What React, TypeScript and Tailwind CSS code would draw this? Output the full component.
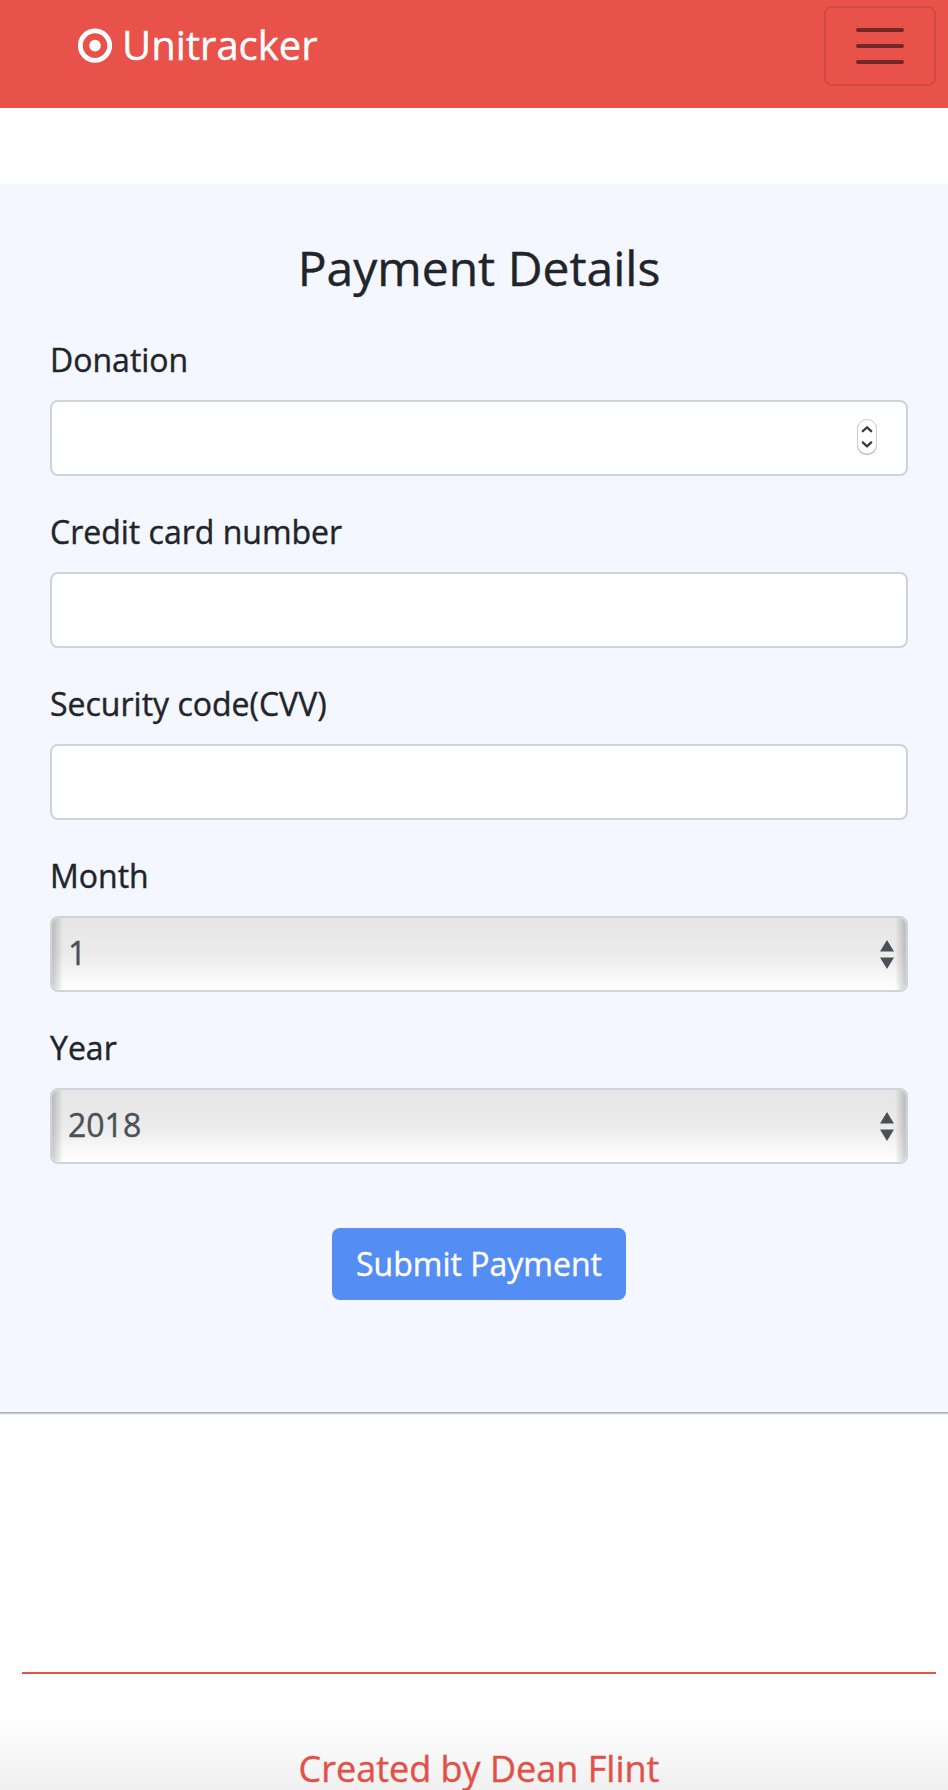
import type { ReactNode } from "react";

function Field({ label, id, children }: { label: string; id: string; children: ReactNode }) {
  return (
    <div className="mb-8 flex flex-col">
      <label htmlFor={id} className="mb-4 h-12 self-start whitespace-nowrap text-[32px] leading-[48px]">
        {label}
      </label>
      {children}
    </div>
  );
}

function TextBox({ id, children }: { id: string; children?: ReactNode }) {
  return (
    <div className="flex h-[76px] items-center rounded-lg border-2 border-[#ced4da] bg-white pr-7">
      <input id={id} type="text" className="h-full min-w-0 flex-1 bg-transparent px-4 text-[32px] text-[#495057] outline-none" />
      {children}
    </div>
  );
}

function Stepper() {
  return (
    <svg width="22" height="40" viewBox="0 0 22 40" fill="none" className="mb-0.5 shrink-0">
      <rect x="1.2" y="2.6" width="19.6" height="35.4" rx="9.6" fill="#aaa" />
      <rect x="1.5" y="2.5" width="19" height="34.5" rx="9.5" fill="#fff" stroke="#cfcfcf" />
      <path d="M6.8 14.2 11 10.3l4.2 3.9M6.8 25.4 11 29.3l4.2-3.9" stroke="#3c3c3c" strokeWidth="2.3" strokeLinecap="round" strokeLinejoin="round" />
    </svg>
  );
}

function SelectBox({ id, value }: { id: string; value: string }) {
  return (
    <button
      id={id}
      type="button"
      className="flex h-[76px] rounded-lg border-2 border-[#ced4da] bg-linear-to-b from-[#e6e6e6] via-[#ebebeb] via-50% to-white text-left text-[32px] leading-[46px] text-[#495057]"
    >
      <span className="flex h-full flex-1 items-center justify-between rounded-md bg-[linear-gradient(90deg,rgba(0,0,0,0.2),rgba(0,0,0,0.13)_4px,transparent_11px,transparent_calc(100%_-_11px),rgba(0,0,0,0.13)_calc(100%_-_4px),rgba(0,0,0,0.2))] pr-3 pl-4 shadow-[inset_0_0_1px_#fff]">
        <span className="pb-[3px]">{value}</span>
        <svg width="14" height="29" viewBox="0 0 14 29" fill="#495057">
          <path d="M7 0l7 11.5H0zM0 17.5h14L7 29z" />
        </svg>
      </span>
    </button>
  );
}

export default function App() {
  return (
    <div className="flex h-[1790px] w-full flex-col overflow-hidden bg-white font-['Open_Sans',sans-serif] text-[#212529] [-webkit-text-stroke:0.4px_currentColor]">
      <header className="flex h-[108px] shrink-0 items-start justify-between bg-[#e9524b] pt-1.5 pr-3 pl-[78px]">
        <a className="mt-[9px] flex h-[60px] items-center text-[40px] leading-[60px] text-white">
          <svg width="34" height="36" viewBox="0 0 34 36" fill="none" className="mr-2.5">
            <circle cx="17" cy="18.6" r="14.7" stroke="#fff" strokeWidth="4.8" />
            <circle cx="17" cy="18.6" r="5.8" fill="#fff" />
          </svg>
          Unitracker
        </a>
        <button type="button" aria-label="Toggle navigation" className="flex h-20 w-28 items-center justify-center rounded-lg border-2 border-black/10">
          <svg width="60" height="60" viewBox="0 0 30 30" stroke="#752926" strokeWidth="2" strokeLinecap="round">
            <path d="M4 7h22M4 15h22M4 23h22" />
          </svg>
        </button>
      </header>

      <main className="mt-[76px] flex h-[1228px] shrink-0 flex-col bg-[#f4f7ff] pt-[55px] pr-10 pl-[50px] shadow-[0_1px_0_#b0b0b4,0_2px_0_#cbcbcb,0_3px_0_#f0f0f0]">
        <h1 className="mb-[39px] h-[58px] text-center text-[48px] leading-[58px]">Payment Details</h1>
        <Field label="Donation" id="donation">
          <TextBox id="donation">
            <Stepper />
          </TextBox>
        </Field>
        <Field label="Credit card number" id="card">
          <TextBox id="card" />
        </Field>
        <Field label="Security code(CVV)" id="cvv">
          <TextBox id="cvv" />
        </Field>
        <Field label="Month" id="month">
          <SelectBox id="month" value="1" />
        </Field>
        <Field label="Year" id="year">
          <SelectBox id="year" value="2018" />
        </Field>
        <button type="button" className="mt-8 flex h-[72px] w-[294px] items-center justify-center self-center whitespace-nowrap rounded-lg bg-[#548df3] text-[32px] leading-[48px] text-white">
          Submit Payment
        </button>
      </main>

      <footer className="mt-[260px] flex flex-1 flex-col pl-[22px] pr-3">
        <hr className="m-0 h-0 border-0 border-t-2 border-[#e9524b]" />
        <div className="-mr-3 -ml-[22px] h-[116px] bg-linear-to-b from-white via-[#fdfdfd] via-45% to-[#f0f0f0] pt-[68px] pl-2.5 text-center text-[36px] leading-[54px] text-[#e2504a]">
          Created by Dean Flint
        </div>
      </footer>
    </div>
  );
}
